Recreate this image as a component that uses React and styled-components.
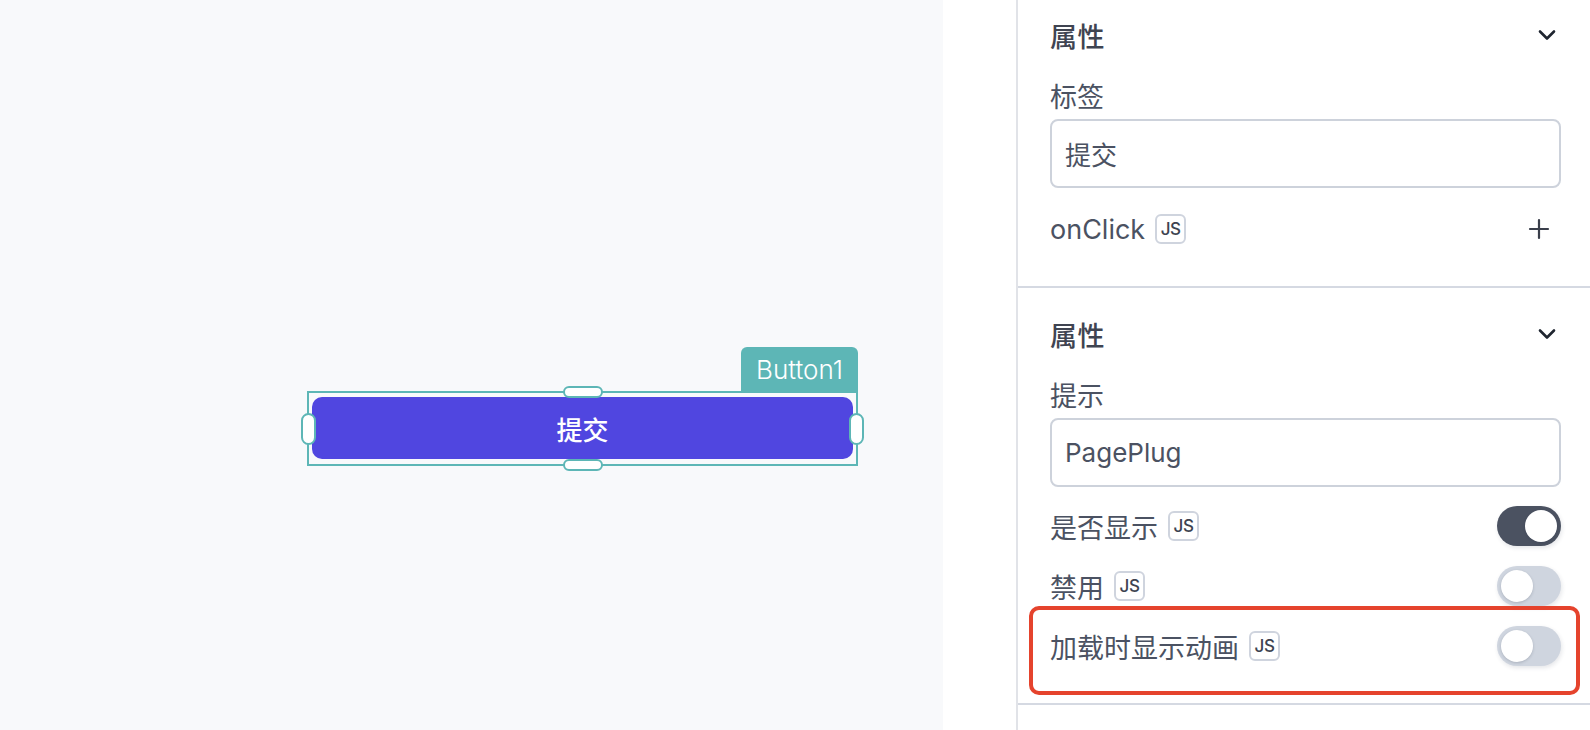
import styled, { createGlobalStyle } from "styled-components";

const GlobalStyle = createGlobalStyle`
  html, body {
    margin: 0;
    padding: 0;
    background: #ffffff;
    overflow: hidden;
  }
  body {
    font-family: Inter, "Noto Sans CJK SC", sans-serif;
    -webkit-font-smoothing: antialiased;
  }
`;

const Page = styled.div`
  display: flex;
  width: 1590px;
  height: 730px;
`;

// Canvas area with the selected widget
const Canvas = styled.div`
  position: relative;
  width: 943px;
  flex-shrink: 0;
  background: #f8f9fb;
`;

const Gutter = styled.div`
  width: 73px;
  flex-shrink: 0;
  background: #ffffff;
`;

const Widget = styled.div`
  position: absolute;
  left: 307px;
  top: 347px;
  width: 551px;
`;

const NameTag = styled.div`
  margin-left: auto;
  width: 117px;
  height: 44px;
  display: flex;
  align-items: center;
  justify-content: center;
  background: #5db6b6;
  color: #ffffff;
  border-radius: 6px 6px 0 0;
  font-family: Inter, sans-serif;
  font-size: 26px;
  font-weight: 300;
`;

const Selection = styled.div`
  position: relative;
  box-sizing: border-box;
  height: 75px;
  padding: 4px 3px 5px 3px;
  border: 2px solid #5db6b6;
`;

const Handle = styled.span`
  position: absolute;
  box-sizing: border-box;
  background: #ffffff;
  border: 2px solid #5db6b6;
  border-radius: 8px;
  ${(p) =>
    p.$side === "top" || p.$side === "bottom"
      ? `width: 40px; height: 12px; left: 50%; margin-left: -20px;`
      : `width: 15px; height: 32px; top: 50%; margin-top: -16px;`}
  ${(p) => p.$side === "top" && `top: -7px;`}
  ${(p) => p.$side === "bottom" && `bottom: -7px;`}
  ${(p) => p.$side === "left" && `left: -8px;`}
  ${(p) => p.$side === "right" && `right: -8px;`}
`;

const SubmitButton = styled.button`
  width: 100%;
  height: 100%;
  border: none;
  border-radius: 10px;
  background: #5046e0;
  color: #ffffff;
  font-family: "Noto Sans CJK SC", sans-serif;
  font-size: 26px;
  font-weight: 500;
  padding: 0;
`;

// Property panel
const Panel = styled.div`
  flex: 1;
  border-left: 2px solid #e1e3e8;
  display: flex;
  flex-direction: column;
  color: #4b5262;
`;

const Section = styled.div`
  padding: ${(p) => p.$pt}px 29px ${(p) => p.$pb}px 32px;
  border-bottom: 2px solid #d5d9e2;
  display: flex;
  flex-direction: column;
`;

const SectionHeader = styled.div`
  height: 70px;
  display: flex;
  align-items: center;
  justify-content: space-between;
  font-family: "Noto Sans CJK SC", sans-serif;
  font-size: 27px;
  font-weight: 500;
  color: #3f4451;
  letter-spacing: 0.5px;
`;

const FieldLabel = styled.div`
  margin-top: 8px;
  line-height: 36px;
  height: 36px;
  font-family: "Noto Sans CJK SC", sans-serif;
  font-size: 27px;
`;

const TextInput = styled.div`
  margin-top: 5px;
  box-sizing: border-box;
  height: 69px;
  display: flex;
  align-items: center;
  padding-left: 13px;
  border: 2px solid #cdd2db;
  border-radius: 8px;
  font-family: Inter, "Noto Sans CJK SC", sans-serif;
  font-size: 26px;
  color: #4b5262;
`;

const Row = styled.div`
  margin-top: ${(p) => p.$mt || 0}px;
  height: 40px;
  display: flex;
  align-items: center;
  justify-content: space-between;
`;

const RowLabel = styled.div`
  display: flex;
  align-items: center;
  font-family: Inter, "Noto Sans CJK SC", sans-serif;
  font-size: 27px;
  color: #4b5262;
`;

const JsBadge = styled.span`
  margin-left: 10px;
  box-sizing: border-box;
  width: 31px;
  height: 30px;
  display: inline-flex;
  align-items: center;
  justify-content: center;
  border: 2px solid #cfd4de;
  border-radius: 6px;
  font-family: Inter, sans-serif;
  font-size: 17px;
  font-weight: 500;
  color: #3d4350;
  letter-spacing: -0.5px;
`;

const Toggle = styled.div`
  position: relative;
  width: 64px;
  height: 40px;
  border-radius: 20px;
  background: ${(p) => (p.$on ? "#4b5261" : "#cfd5df")};
  box-shadow: 1px 2px 4px rgba(40, 50, 70, 0.12);
`;

const Knob = styled.span`
  position: absolute;
  top: 4px;
  ${(p) => (p.$on ? "right: 4px;" : "left: 4px;")}
  width: 32px;
  height: 32px;
  border-radius: 50%;
  background: #ffffff;
  box-shadow: 0 1px 3px rgba(30, 40, 60, 0.2);
`;

const Highlight = styled.div`
  position: relative;
  margin: 0 -19px 0 -21px;
  box-sizing: border-box;
  height: 89px;
  padding: 16px 15px 0 17px;
  border: 4px solid #e5432d;
  border-radius: 10px;
`;

const IconButton = styled.span`
  display: inline-flex;
  align-items: center;
  justify-content: center;
  color: #1f2530;
  margin-right: ${(p) => p.$mr || 0}px;
`;

const Chevron = () => (
  <svg width="18" height="12" viewBox="0 0 18 12" fill="none">
    <path d="M2 2.5 L9 9.5 L16 2.5" stroke="currentColor" strokeWidth="2.6" strokeLinecap="round" strokeLinejoin="round" />
  </svg>
);

const Plus = () => (
  <svg width="22" height="22" viewBox="0 0 22 22" fill="none">
    <path d="M11 2 V20 M2 11 H20" stroke="#3a3f4b" strokeWidth="2.2" strokeLinecap="round" />
  </svg>
);

const Switch = ({ on }) => (
  <Toggle $on={on}>
    <Knob $on={on} />
  </Toggle>
);

export default function App() {
  return (
    <Page>
      <GlobalStyle />
      <Canvas>
        <Widget>
          <NameTag>Button1</NameTag>
          <Selection>
            <Handle $side="top" />
            <Handle $side="bottom" />
            <Handle $side="left" />
            <Handle $side="right" />
            <SubmitButton>提交</SubmitButton>
          </Selection>
        </Widget>
      </Canvas>
      <Gutter />
      <Panel>
        <Section $pt={0} $pb={37}>
          <SectionHeader>
            属性
            <IconButton $mr={5}>
              <Chevron />
            </IconButton>
          </SectionHeader>
          <FieldLabel>标签</FieldLabel>
          <TextInput>提交</TextInput>
          <Row $mt={21}>
            <RowLabel>
              onClick<JsBadge>JS</JsBadge>
            </RowLabel>
            <IconButton $mr={11}>
              <Plus />
            </IconButton>
          </Row>
        </Section>
        <Section $pt={11} $pb={8}>
          <SectionHeader>
            属性
            <IconButton $mr={5}>
              <Chevron />
            </IconButton>
          </SectionHeader>
          <FieldLabel>提示</FieldLabel>
          <TextInput>PagePlug</TextInput>
          <Row $mt={19}>
            <RowLabel>
              是否显示<JsBadge>JS</JsBadge>
            </RowLabel>
            <Switch on />
          </Row>
          <Row $mt={20}>
            <RowLabel>
              禁用<JsBadge>JS</JsBadge>
            </RowLabel>
            <Switch />
          </Row>
          <Highlight>
            <Row>
              <RowLabel>
                加载时显示动画<JsBadge>JS</JsBadge>
              </RowLabel>
              <Switch />
            </Row>
          </Highlight>
        </Section>
      </Panel>
    </Page>
  );
}
